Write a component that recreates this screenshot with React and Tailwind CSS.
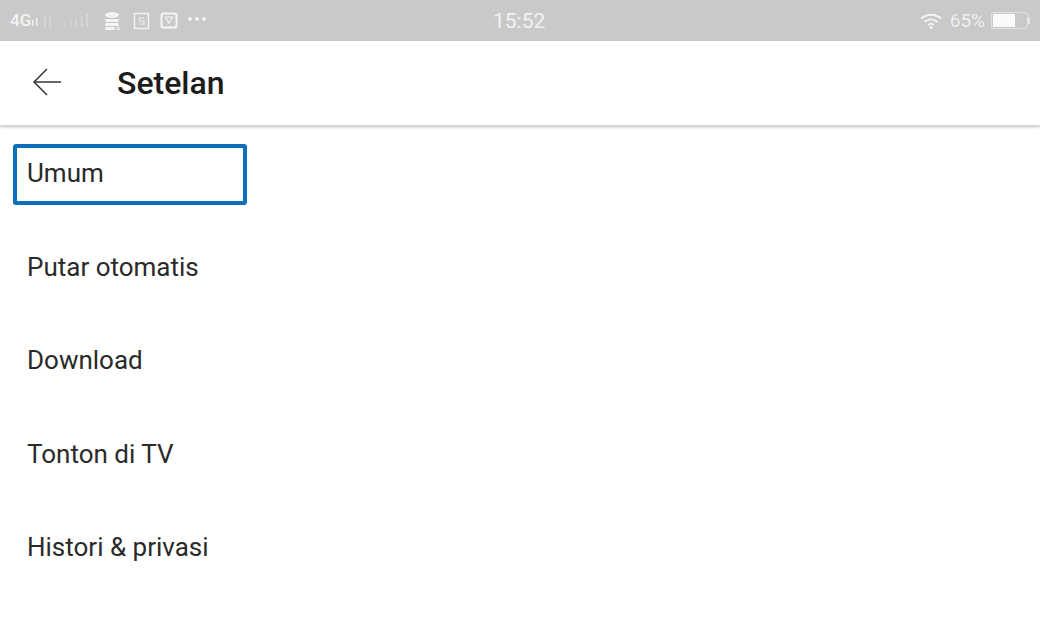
const items = ['Putar otomatis', 'Download', 'Tonton di TV', 'Histori & privasi'];

function StatusLeft() {
  return (
    <div className="flex items-center">
      <span className="text-[17px] font-medium text-[#f4f4f4] leading-none">4G</span>
      <svg width="76" height="20" viewBox="0 0 76 20" fill="#e4e4e4">
        <rect x="1" y="9" width="1.5" height="6" fill="#f0f0f0" />
        <rect x="5" y="7" width="1.5" height="8" fill="#f0f0f0" />
        <rect x="13" y="5" width="2" height="11" opacity="0.5" />
        <rect x="18" y="4" width="2" height="12" opacity="0.5" />
        <rect x="34" y="11" width="1.5" height="5" opacity="0.5" />
        <rect x="39" y="9" width="1.5" height="7" opacity="0.5" />
        <rect x="44" y="7" width="1.5" height="9" opacity="0.5" />
        <rect x="50" y="5" width="1.5" height="11" opacity="0.5" />
        <rect x="55" y="3" width="2" height="13" opacity="0.5" />
      </svg>
      <svg width="20" height="22" viewBox="0 0 20 22" className="ml-[-4px]">
        <ellipse cx="9" cy="5" rx="7" ry="3" fill="#f4f4f4" />
        <rect x="2" y="9" width="14" height="3" rx="1.5" fill="#f4f4f4" />
        <rect x="2" y="13" width="14" height="3" rx="1.5" fill="#f4f4f4" />
        <rect x="2" y="17" width="10" height="3" rx="1.5" fill="#f4f4f4" />
        <path d="M13 20l2-4 3 4z" fill="#e8e8e8" />
      </svg>
      <svg width="18" height="18" viewBox="0 0 18 18" className="ml-[10px]" fill="none">
        <rect x="1.500" y="1.500" width="14" height="15" stroke="#f2f2f2" strokeWidth="1.500" />
        <path d="M11 6H6.500v3H11v3H6.500" stroke="#ececec" strokeWidth="1.200" />
      </svg>
      <svg width="19" height="18" viewBox="0 0 19 18" className="ml-[9px]" fill="none">
        <rect x="1.500" y="1.500" width="15" height="14" rx="2" stroke="#f6f6f6" strokeWidth="2" />
        <path d="M5.500 5.500L9 11l3.500-5.500" stroke="#f0f0f0" strokeWidth="1.300" />
        <path d="M5 5h8" stroke="#f0f0f0" strokeWidth="1.300" />
      </svg>
      <div className="flex gap-[3px] ml-[9px] mb-[4px]">
        <span className="w-[4px] h-[4px] rounded-full bg-[#f2f2f2]" />
        <span className="w-[4px] h-[4px] rounded-full bg-[#f2f2f2]" />
        <span className="w-[4px] h-[4px] rounded-full bg-[#f2f2f2]" />
      </div>
    </div>
  );
}

function StatusRight() {
  return (
    <div className="flex items-center">
      <svg width="24" height="18" viewBox="0 0 24 18" fill="none" stroke="#f4f4f4" strokeWidth="1.800">
        <path d="M2 6.500C8 1.500 16 1.500 22 6.500" />
        <path d="M5.500 10C9.500 6.800 14.500 6.800 18.500 10" />
        <path d="M9 13c2-1.500 4-1.500 6 0" />
        <circle cx="12" cy="15.500" r="1.600" fill="#f4f4f4" stroke="none" />
      </svg>
      <span className="ml-[7px] text-[19px] text-[#efefef] leading-none">65%</span>
      <div className="ml-[6px] flex items-center">
        <div className="w-[37px] h-[17px] rounded-[3px] border border-[#e2e2e2] p-[1px]">
          <div className="w-[22px] h-full bg-[#fafafa] rounded-[1px]" />
        </div>
        <div className="w-[2px] h-[7px] bg-[#e4e4e4]" />
      </div>
    </div>
  );
}

export default function App() {
  return (
    <div className="w-[1040px] h-[624px] overflow-hidden bg-white font-['Roboto',sans-serif]">
      <div className="h-[41px] bg-[#c9c9c9] flex items-center justify-between pl-[10px] pr-[10px] relative">
        <StatusLeft />
        <span className="absolute left-[493px] top-[9px] text-[21px] leading-[24px] text-[#f2f2f2]">15:52</span>
        <StatusRight />
      </div>

      <div className="h-[85px] flex items-center pl-[33px] border-b border-[#d2d2d2] shadow-[0_1px_3px_rgba(0,0,0,0.25)]">
        <svg width="28" height="28" viewBox="0 0 28 28" fill="none" stroke="#333" strokeWidth="1.500" className="mb-[2px]">
          <path d="M1 14H28" />
          <path d="M14 1L1 14l13 13" />
        </svg>
        <h1 className="ml-[56px] text-[32px] font-medium text-[#1c1c1c] leading-none">Setelan</h1>
      </div>

      <div className="pt-[18px]">
        <div className="ml-[13px] w-[234px] h-[61px] border-[4px] border-[#0b6fba] rounded-[3px] flex items-center pl-[10px]">
          <span className="text-[26px] text-[#2a2a2a] leading-none mb-[4px]">Umum</span>
        </div>
        <div className="mt-[1px] pl-[27px]">
          {items.map((item) => (
            <div key={item} className="h-[93.500px] flex items-center pt-[28px] text-[26px] text-[#2a2a2a] leading-none">
              {item}
            </div>
          ))}
        </div>
      </div>
    </div>
  );
}
